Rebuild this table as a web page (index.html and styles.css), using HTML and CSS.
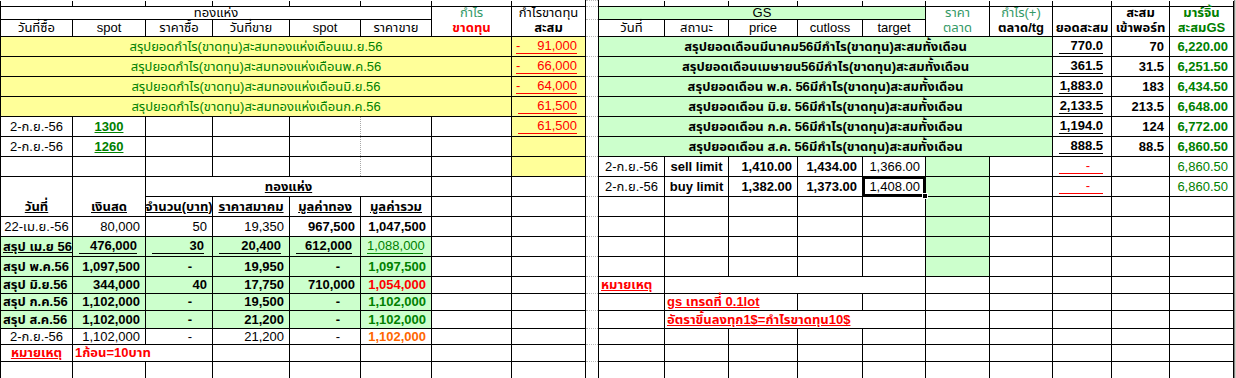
FILE: index.html
```html
<!DOCTYPE html>
<html lang="th">
<head>
<meta charset="utf-8">
<title>สรุปทองแห่ง / GS</title>
<link rel="stylesheet" href="styles.css">
</head>
<body>
<div class="sheet">
<table class="grid">
<colgroup>
<col class="k1"><col class="k2"><col class="k3"><col class="k4"><col class="k5"><col class="k6"><col class="k7"><col class="k8">
<col class="k9">
<col class="k10"><col class="k11"><col class="k12"><col class="k13"><col class="k14"><col class="k15"><col class="k16"><col class="k17"><col class="k18"><col class="k19">
</colgroup>
<tbody>
<tr class="h6 top">
<td></td><td></td><td></td><td></td><td></td><td></td><td></td><td></td><td class="gap"></td>
<td></td><td></td><td></td><td></td><td></td><td></td><td></td><td></td><td></td><td></td>
</tr>
<tr class="h12">
<td colspan="6" class="c">ทองแห่ง</td>
<td class="c mg nb">กำไร</td>
<td class="c nb">กำไรขาดทุน</td>
<td class="gap"></td>
<td colspan="5" class="c gr">GS</td>
<td class="c mg nb">ราคา</td>
<td class="c mg nb">กำไร(+)</td>
<td class="nb"></td>
<td class="c b nb">สะสม</td>
<td class="c b grn nb">มาร์จิ้น</td>
</tr>
<tr class="h17">
<td class="c">วันที่ซื้อ</td><td class="c">spot</td><td class="c">ราคาซื้อ</td><td class="c">วันที่ขาย</td><td class="c">spot</td><td class="c">ราคาขาย</td>
<td class="c b red">ขาดทุน</td><td class="c b">สะสม</td>
<td class="gap"></td>
<td class="c">วันที่</td><td class="c">สถานะ</td><td class="c">price</td><td class="c">cutloss</td><td class="c">target</td>
<td class="c mg">ตลาด</td><td class="c b">ตลาด/tg</td><td class="c b">ยอดสะสม</td><td class="b clip"><div class="cbox">เข้าพอร์ท</div></td><td class="c b grn">สะสมGS</td>
</tr>
<tr class="h20">
<td colspan="7" class="y c grn">สรุปยอดกำไร(ขาดทุน)สะสมทองแห่งเดือนเม.ย.56</td>
<td class="y"><span class="acct red sp"><span>-</span><span>91,000</span></span></td>
<td class="gap"></td>
<td colspan="7" class="gr c b">สรุปยอดเดือนมีนาคม56มีกำไร(ขาดทุน)สะสมทั้งเดือน</td>
<td class="nl"><span class="acct b">770.0</span></td><td class="r b">70</td><td class="r b grn">6,220.00</td>
</tr>
<tr class="h20">
<td colspan="7" class="y c grn">สรุปยอดกำไร(ขาดทุน)สะสมทองแห่งเดือนพ.ค.56</td>
<td class="y"><span class="acct red sp"><span>-</span><span>66,000</span></span></td>
<td class="gap"></td>
<td colspan="7" class="gr c b">สรุปยอดเดือนเมษายน56มีกำไร(ขาดทุน)สะสมทั้งเดือน</td>
<td class="nl"><span class="acct b">361.5</span></td><td class="r b">31.5</td><td class="r b grn">6,251.50</td>
</tr>
<tr class="h20">
<td colspan="7" class="y c grn">สรุปยอดกำไร(ขาดทุน)สะสมทองแห่งเดือนมิ.ย.56</td>
<td class="y"><span class="acct red sp"><span>-</span><span>64,000</span></span></td>
<td class="gap"></td>
<td colspan="7" class="gr c b">สรุปยอดเดือน พ.ค. 56มีกำไร(ขาดทุน)สะสมทั้งเดือน</td>
<td><span class="acct b">1,883.0</span></td><td class="r b">183</td><td class="r b grn">6,434.50</td>
</tr>
<tr class="h20">
<td colspan="7" class="y c grn">สรุปยอดกำไร(ขาดทุน)สะสมทองแห่งเดือนก.ค.56</td>
<td class="y"><span class="acct red">61,500</span></td>
<td class="gap"></td>
<td colspan="7" class="gr c b">สรุปยอดเดือน มิ.ย. 56มีกำไร(ขาดทุน)สะสมทั้งเดือน</td>
<td><span class="acct b">2,133.5</span></td><td class="r b">213.5</td><td class="r b grn">6,648.00</td>
</tr>
<tr class="h20">
<td class="c">2-ก.ย.-56</td><td class="c"><span class="b grn u">1300</span></td><td></td><td></td><td class="dr"></td><td class="dl"></td><td></td>
<td class="y"><span class="acct red">61,500</span></td>
<td class="gap"></td>
<td colspan="7" class="gr c b">สรุปยอดเดือน ก.ค. 56มีกำไร(ขาดทุน)สะสมทั้งเดือน</td>
<td><span class="acct b">1,194.0</span></td><td class="r b">124</td><td class="r b grn">6,772.00</td>
</tr>
<tr class="h20">
<td class="c">2-ก.ย.-56</td><td class="c"><span class="b grn u">1260</span></td><td></td><td></td><td class="dr"></td><td class="dl"></td><td></td>
<td class="y"></td>
<td class="gap"></td>
<td colspan="7" class="gr c b">สรุปยอดเดือน ส.ค. 56มีกำไร(ขาดทุน)สะสมทั้งเดือน</td>
<td><span class="acct b">888.5</span></td><td class="r b">88.5</td><td class="r b grn">6,860.50</td>
</tr>
<tr class="h20">
<td></td><td></td><td></td><td></td><td class="dr"></td><td class="dl"></td><td></td>
<td class="y"></td>
<td class="gap"></td>
<td class="c">2-ก.ย.-56</td><td class="c b">sell limit</td><td class="r b">1,410.00</td><td class="r b">1,434.00</td><td class="r">1,366.00</td>
<td class="gr"></td><td></td><td><span class="acct red dashr">-</span></td><td></td><td class="r grn">6,860.50</td>
</tr>
<tr class="h20">
<td rowspan="2" class="c b bot"><span class="u">วันที่</span></td>
<td rowspan="2" class="c b bot"><span class="u">เงินสด</span></td>
<td colspan="4" class="c b"><span class="u">ทองแห่ง</span></td>
<td></td><td></td>
<td class="gap"></td>
<td class="c">2-ก.ย.-56</td><td class="c b">buy limit</td><td class="r b">1,382.00</td><td class="r b">1,373.00</td><td class="r sel">1,408.00<span class="handle"></span></td>
<td class="gr"></td><td></td><td><span class="acct red dashr">-</span></td><td></td><td class="r grn">6,860.50</td>
</tr>
<tr class="h20">
<td class="b clip"><div class="cbox"><span class="u">จำนวน(บาท)</span></div></td>
<td class="c b"><span class="u">ราคาสมาคม</span></td>
<td class="c b"><span class="u">มูลค่าทอง</span></td>
<td class="c b"><span class="u">มูลค่ารวม</span></td>
<td></td><td></td>
<td class="gap"></td>
<td></td><td></td><td></td><td></td><td></td><td class="gr"></td><td></td><td></td><td></td><td></td>
</tr>
<tr class="h20">
<td class="c">22-เม.ย.-56</td><td class="r">80,000</td><td class="r">50</td><td class="r">19,350</td><td class="r b">967,500</td><td class="r b">1,047,500</td>
<td></td><td></td>
<td class="gap"></td>
<td></td><td></td><td></td><td></td><td></td><td class="gr"></td><td></td><td></td><td></td><td></td>
</tr>
<tr class="h20">
<td class="gr b l"><span class="u">สรุป เม.ย 56</span></td>
<td class="gr"><span class="acct b">476,000</span></td>
<td class="gr"><span class="acct b">30</span></td>
<td class="gr"><span class="acct b">20,400</span></td>
<td class="gr"><span class="acct b">612,000</span></td>
<td class="gr"><span class="acct grn">1,088,000</span></td>
<td></td><td></td>
<td class="gap"></td>
<td></td><td></td><td></td><td></td><td></td><td class="gr"></td><td></td><td></td><td></td><td></td>
</tr>
<tr class="h20">
<td class="gr b l">สรุป พ.ค.56</td>
<td class="gr r b">1,097,500</td>
<td class="gr r b dash">-</td>
<td class="gr r b">19,950</td>
<td class="gr r b dash">-</td>
<td class="gr r b grn">1,097,500</td>
<td></td><td></td>
<td class="gap"></td>
<td></td><td></td><td></td><td></td><td></td><td class="gr"></td><td></td><td></td><td></td><td></td>
</tr>
<tr class="h17">
<td class="gr b l">สรุป มิ.ย.56</td>
<td class="gr r b">344,000</td>
<td class="gr r b">40</td>
<td class="gr r b">17,750</td>
<td class="gr r b">710,000</td>
<td class="gr r b red">1,054,000</td>
<td></td><td></td>
<td class="gap"></td>
<td class="l"><span class="b red u">หมายเหตุ</span></td><td colspan="4"></td><td></td><td></td><td></td><td></td><td></td>
</tr>
<tr class="h17">
<td class="gr b l">สรุป ก.ค.56</td>
<td class="gr r b">1,102,000</td>
<td class="gr r b dash">-</td>
<td class="gr r b">19,500</td>
<td class="gr r b dash">-</td>
<td class="gr r b grn">1,102,000</td>
<td></td><td></td>
<td class="gap"></td>
<td></td><td colspan="2" class="l"><span class="b red u">gs เทรดที่ 0.1lot</span></td><td></td><td></td><td></td><td></td><td></td><td></td><td></td>
</tr>
<tr class="h18">
<td class="gr b l">สรุป ส.ค.56</td>
<td class="gr r b">1,102,000</td>
<td class="gr r b dash">-</td>
<td class="gr r b">21,200</td>
<td class="gr r b dash">-</td>
<td class="gr r b grn">1,102,000</td>
<td></td><td></td>
<td class="gap"></td>
<td></td><td colspan="4" class="l"><span class="b red u">อัตราขึ้นลงทุก1$=กำไรขาดทุน10$</span></td><td></td><td></td><td></td><td></td><td></td>
</tr>
<tr class="h16">
<td class="c">2-ก.ย.-56</td>
<td class="r">1,102,000</td>
<td class="r dash">-</td>
<td class="r">21,200</td>
<td class="r dash">-</td>
<td class="r b org">1,102,000</td>
<td></td><td></td>
<td class="gap"></td>
<td></td><td></td><td></td><td></td><td></td><td></td><td></td><td></td><td></td><td></td>
</tr>
<tr class="h17">
<td class="c"><span class="b red u">หมายเหตุ</span></td>
<td colspan="2" class="l b red">1ก้อน=10บาท</td>
<td></td><td></td><td></td><td></td><td></td>
<td class="gap"></td>
<td></td><td></td><td></td><td></td><td></td><td></td><td></td><td></td><td></td><td></td>
</tr>
<tr class="h17">
<td></td><td></td><td></td><td></td><td></td><td></td><td></td><td></td>
<td class="gap"></td>
<td></td><td></td><td></td><td></td><td></td><td></td><td></td><td></td><td></td><td></td>
</tr>
</tbody>
</table>
<div class="edge"></div>
</div>
</body>
</html>
```
FILE: styles.css
```css
* { box-sizing: border-box; }
html, body { margin: 0; padding: 0; background: #fff; }
body {
  font-family: "Liberation Sans", Arial, "Noto Sans Thai", "Noto Sans", "DejaVu Sans", sans-serif;
  font-size: 13px;
  color: #000;
}
.sheet { display: flex; width: 1236px; height: 378px; overflow: hidden; }
.edge { width: 3px; background: #d4d0c8; border-left: 1px solid #808080; }

.grid { table-layout: fixed; border-collapse: collapse; width: 1233px; }
.grid td {
  border: 1px solid #000;
  padding: 0 2px;
  white-space: nowrap;
  line-height: 14px;
  vertical-align: middle;
}

.k1 { width: 72px; } .k2 { width: 73px; } .k3 { width: 67px; } .k4 { width: 77px; }
.k5 { width: 71px; } .k6 { width: 71px; } .k7 { width: 80px; } .k8 { width: 74px; }
.k9 { width: 13px; }
.k10 { width: 66px; } .k11 { width: 64px; } .k12 { width: 69px; } .k13 { width: 65px; }
.k14 { width: 63px; } .k15 { width: 64px; } .k16 { width: 63px; } .k17 { width: 59px; }
.k18 { width: 58px; } .k19 { width: 64px; }

.h6 td { height: 6px; }
.h12 td { height: 12px; line-height: 12px; }
.h16 td { height: 16px; }
.h17 td { height: 17px; }
.h18 td { height: 18px; }
.h20 td { height: 20px; }
.top td { border-top-style: hidden; }

.grid td.gap { border-top: 1px dotted #b8b8b8; border-bottom: 1px dotted #b8b8b8; }
.grid td.nb { border-bottom-style: hidden; }
.grid td.dr { border-right: 1px dotted #a8a8a8; }
.grid td.dl { border-left: 1px dotted #a8a8a8; }
.grid td.nl { border-left-color: #ccffcc; }

.y { background: #ffff99; }
.gr { background: #ccffcc; }

.c { text-align: center; }
.grid td.r { text-align: right; padding-right: 5px; }
.grid td.l { text-align: left; padding-left: 2px; }
.grid td.dash { padding-right: 20px; }
.grid td.bot { vertical-align: bottom; padding-bottom: 2px; }
.b { font-weight: bold; }
.u { text-decoration: underline; }

.red { color: #ff0000; }
.grn { color: #008000; }
.mg { color: #339966; }
.org { color: #ff6600; }

.acct {
  display: block;
  margin: 0 6px 0 4px;
  border-bottom: 1px solid currentColor;
  text-align: right;
  line-height: 14px;
}
.acct.sp { display: flex; justify-content: space-between; margin-left: 2px; }
.acct.dashr { padding-right: 13px; }

.grid td.clip { overflow: hidden; padding: 0; }
.cbox { display: flex; justify-content: center; overflow: hidden; }

.grid td.sel { position: relative; box-shadow: inset 0 0 0 2px #000; }
.handle {
  position: absolute;
  right: -3px;
  bottom: -3px;
  width: 6px;
  height: 6px;
  background: #000;
  border: 1px solid #fff;
}
```
